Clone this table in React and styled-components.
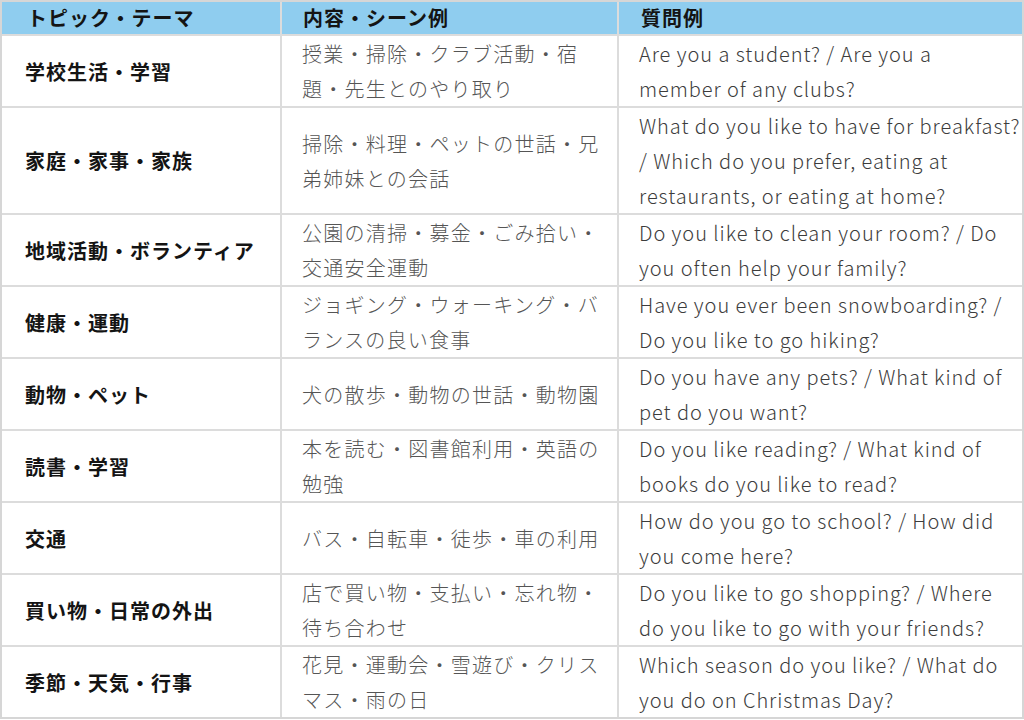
import React from 'react';
import styled, { createGlobalStyle } from 'styled-components';

const GlobalStyle = createGlobalStyle`
  html, body {
    margin: 0;
    padding: 0;
    background: #ffffff;
  }
  body {
    font-family: "Noto Sans CJK JP", "Noto Sans", sans-serif;
  }
`;

const Table = styled.table`
  width: 1024px;
  table-layout: fixed;
  border-collapse: separate;
  border-spacing: 0;
  border: 2px solid #d6d6d6;
  font-size: 20px;
  letter-spacing: 1px;
`;

const HeadCell = styled.th`
  background: #8fcdef;
  color: #141414;
  font-weight: 700;
  text-align: left;
  line-height: 32px;
  padding: 0 0 0 ${(p) => p.$pad}px;
  border-bottom: 2px solid #dcdcdc;
  border-right: ${(p) => (p.$last ? 'none' : '2px solid #dcdcdc')};
  white-space: nowrap;
`;

const Cell = styled.td`
  vertical-align: middle;
  line-height: 35px;
  padding: 0 0 0 ${(p) => p.$pad}px;
  border-bottom: ${(p) => (p.$bottom ? 'none' : '2px solid #dcdcdc')};
  border-right: ${(p) => (p.$last ? 'none' : '2px solid #dcdcdc')};
  white-space: nowrap;
  overflow: hidden;
`;

const TopicCell = styled(Cell)`
  color: #141414;
  font-weight: 700;
`;

const SceneCell = styled(Cell)`
  color: #555555;
  font-weight: 300;
  letter-spacing: 1.25px;
`;

const QuestionCell = styled(Cell)`
  color: #3c3c3c;
  font-weight: 300;
  letter-spacing: 0.95px;
`;

const Line = styled.div``;

const rows = [
  {
    topic: '学校生活・学習',
    scene: ['授業・掃除・クラブ活動・宿', '題・先生とのやり取り'],
    question: ['Are you a student? / Are you a', 'member of any clubs?'],
  },
  {
    topic: '家庭・家事・家族',
    scene: ['掃除・料理・ペットの世話・兄', '弟姉妹との会話'],
    question: [
      'What do you like to have for breakfast?',
      '/ Which do you prefer, eating at',
      'restaurants, or eating at home?',
    ],
  },
  {
    topic: '地域活動・ボランティア',
    scene: ['公園の清掃・募金・ごみ拾い・', '交通安全運動'],
    question: ['Do you like to clean your room? / Do', 'you often help your family?'],
  },
  {
    topic: '健康・運動',
    scene: ['ジョギング・ウォーキング・バ', 'ランスの良い食事'],
    question: ['Have you ever been snowboarding? /', 'Do you like to go hiking?'],
  },
  {
    topic: '動物・ペット',
    scene: ['犬の散歩・動物の世話・動物園'],
    question: ['Do you have any pets? / What kind of', 'pet do you want?'],
  },
  {
    topic: '読書・学習',
    scene: ['本を読む・図書館利用・英語の', '勉強'],
    question: ['Do you like reading? / What kind of', 'books do you like to read?'],
  },
  {
    topic: '交通',
    scene: ['バス・自転車・徒歩・車の利用'],
    question: ['How do you go to school? / How did', 'you come here?'],
  },
  {
    topic: '買い物・日常の外出',
    scene: ['店で買い物・支払い・忘れ物・', '待ち合わせ'],
    question: ['Do you like to go shopping? / Where', 'do you like to go with your friends?'],
  },
  {
    topic: '季節・天気・行事',
    scene: ['花見・運動会・雪遊び・クリス', 'マス・雨の日'],
    question: ['Which season do you like? / What do', 'you do on Christmas Day?'],
  },
];

const App = () => {
  return (
    <>
      <GlobalStyle />
      <Table>
        <colgroup>
          <col style={{ width: 280 }} />
          <col style={{ width: 337 }} />
          <col />
        </colgroup>
        <thead>
          <tr>
            <HeadCell $pad={25}>トピック・テーマ</HeadCell>
            <HeadCell $pad={21}>内容・シーン例</HeadCell>
            <HeadCell $pad={22} $last>
              質問例
            </HeadCell>
          </tr>
        </thead>
        <tbody>
          {rows.map((row, i) => {
            const bottom = i === rows.length - 1;
            return (
              <tr key={row.topic}>
                <TopicCell $pad={23} $bottom={bottom}>
                  {row.topic}
                </TopicCell>
                <SceneCell $pad={20} $bottom={bottom}>
                  {row.scene.map((l) => (
                    <Line key={l}>{l}</Line>
                  ))}
                </SceneCell>
                <QuestionCell $pad={20} $bottom={bottom} $last>
                  {row.question.map((l) => (
                    <Line key={l}>{l}</Line>
                  ))}
                </QuestionCell>
              </tr>
            );
          })}
        </tbody>
      </Table>
    </>
  );
};

export default App;
